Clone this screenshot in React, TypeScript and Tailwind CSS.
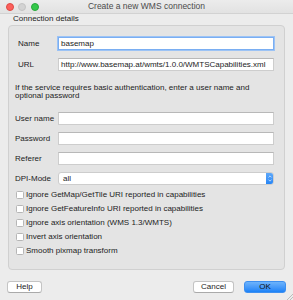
import { ChevronUp, ChevronDown } from "lucide-react";

const authFields = ["User name", "Password", "Referer"];

const options = [
	"Ignore GetMap/GetTile URI reported in capabilities",
	"Ignore GetFeatureInfo URI reported in capabilities",
	"Ignore axis orientation (WMS 1.3/WMTS)",
	"Invert axis orientation",
	"Smooth pixmap transform",
];

function TextBox({ value = "", focused = false }: { value?: string; focused?: boolean }) {
	return (
		<div
			className={`flex-1 h-[13px] bg-white flex items-center pl-[2px] leading-[13px] border ${
				focused
					? "border-[#7aaef2] shadow-[0_0_0_1px_#9cc3f5]"
					: "border-[#cdcdcd] border-t-[#b8b8b8]"
			}`}
		>
			{value}
		</div>
	);
}

function Button({ label, primary = false, width }: { label: string; primary?: boolean; width: string }) {
	return (
		<div
			className={`${width} h-[12px] rounded-[3px] flex items-center justify-center leading-[12px] ${
				primary
					? "bg-gradient-to-b from-[#6db3fb] to-[#1a82f7] border border-[#3d8ff0] text-[#111]"
					: "bg-white border border-[#c4c4c4] border-b-[#aaaaaa]"
			}`}
		>
			{label}
		</div>
	);
}

export default function App() {
	return (
		<div className="w-[293px] h-[300px] bg-[#ececec] font-['Liberation_Sans',Arial,sans-serif] text-[8px] text-[#1c1c1c] flex flex-col overflow-hidden relative">
			{/* title bar */}
			<div className="h-[14px] bg-gradient-to-b from-[#ececec] to-[#e2e2e2] border-b border-[#d2d2d2] flex items-center relative">
				<div className="flex gap-[4.5px] pl-[5.5px]">
					<span className="w-[8px] h-[8px] rounded-full bg-[#fc605c] border-[0.5px] border-[#de4a44]" />
					<span className="w-[8px] h-[8px] rounded-full bg-[#d3d3d3] border-[0.5px] border-[#c4c4c4]" />
					<span className="w-[8px] h-[8px] rounded-full bg-[#34c84a] border-[0.5px] border-[#27a83a]" />
				</div>
				<div className="absolute inset-0 flex items-center justify-center text-[8.5px] text-[#4b4b4b]">
					Create a new WMS connection
				</div>
			</div>

			<div className="h-[11px] pl-[13px] leading-[9px]">Connection details</div>

			{/* group box */}
			<div className="ml-[8px] w-[277px] h-[245px] rounded-[4px] border border-[#d0d0d0] bg-[#e4e4e4] flex flex-col">
				<div className="pt-[11px] pl-[9px] pr-[10px] flex flex-col gap-[8px]">
					<div className="flex items-center">
						<span className="w-[40px]">Name</span>
						<TextBox value="basemap" focused />
					</div>
					<div className="flex items-center">
						<span className="w-[40px]">URL</span>
						<TextBox value="http://www.basemap.at/wmts/1.0.0/WMTSCapabilities.xml" />
					</div>
				</div>

				<p className="mt-[13px] pl-[6px] pr-[20px] leading-[8px]">
					If the service requires basic authentication, enter a user name and optional password
				</p>

				<div className="mt-[12px] pl-[6px] pr-[10px] flex flex-col gap-[7px]">
					{authFields.map((f) => (
						<div key={f} className="flex items-center">
							<span className="w-[43px]">{f}</span>
							<TextBox />
						</div>
					))}
					<div className="flex items-center">
						<span className="w-[43px]">DPI-Mode</span>
						<div className="flex-1 h-[13px] bg-white border border-[#cdcdcd] rounded-[3px] flex items-center justify-between pl-[4px] overflow-hidden">
							<span>all</span>
							<span className="w-[8px] h-[13px] bg-gradient-to-b from-[#62abf9] to-[#1f82f5] flex flex-col items-center justify-center text-white -mr-px">
								<ChevronUp className="w-[6px] h-[5px] -mb-[1px]" strokeWidth={3} />
								<ChevronDown className="w-[6px] h-[5px]" strokeWidth={3} />
							</span>
						</div>
					</div>
				</div>

				<div className="mt-[3px] pl-[7px] flex flex-col">
					{options.map((o) => (
						<div key={o} className="h-[14px] flex items-center gap-[2px]">
							<span className="w-[8px] h-[8px] bg-white border border-[#b6b6b6] rounded-[1.5px]" />
							<span>{o}</span>
						</div>
					))}
				</div>
			</div>

			{/* buttons */}
			<div className="mt-[11px] pl-[7px] pr-[7px] flex items-center">
				<Button label="Help" width="w-[35px]" />
				<div className="flex-1" />
				<Button label="Cancel" width="w-[41px]" />
				<div className="w-[10px]" />
				<Button label="OK" width="w-[42px]" primary />
			</div>

			{/* resize grip */}
			<svg className="absolute right-0 bottom-0" width="8" height="8" viewBox="0 0 8 8">
				<line x1="2" y1="8" x2="8" y2="2" stroke="#a8a8a8" strokeWidth="0.7" />
				<line x1="5" y1="8" x2="8" y2="5" stroke="#a8a8a8" strokeWidth="0.7" />
			</svg>
		</div>
	);
}
